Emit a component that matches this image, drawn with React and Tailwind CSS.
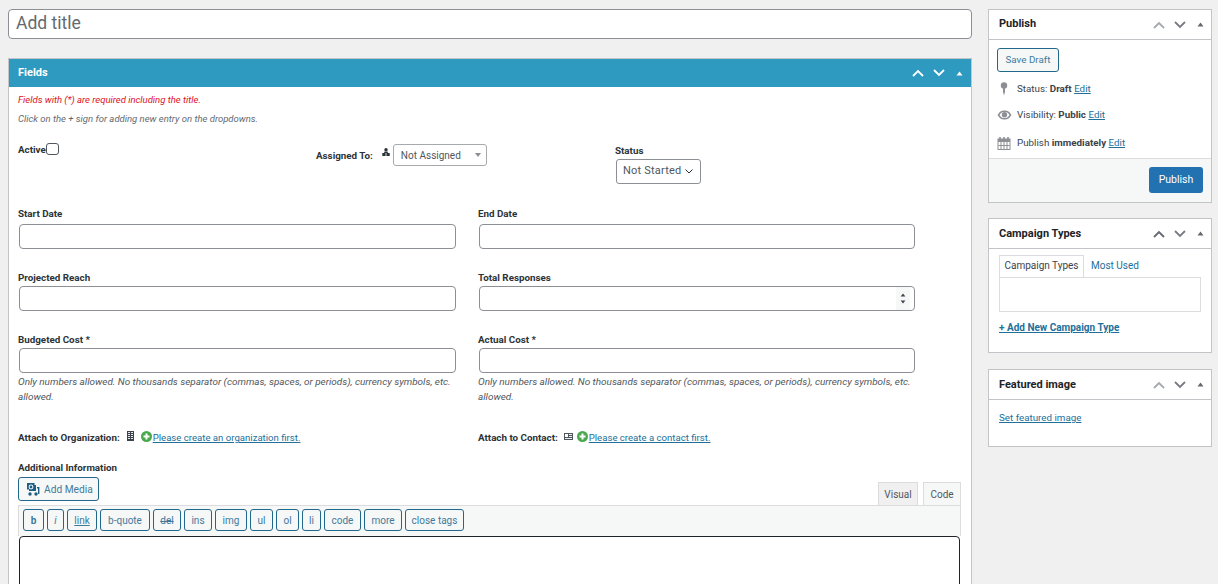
import React from "react";

const Up = ({ c = "#a7aaad" }) => (
  <svg width="12" height="8" viewBox="0 0 12 8" fill="none" stroke={c} strokeWidth="1.8"><path d="M1 7 L6 2 L11 7" /></svg>
);
const Down = ({ c = "#50575e" }) => (
  <svg width="12" height="8" viewBox="0 0 12 8" fill="none" stroke={c} strokeWidth="1.8"><path d="M1 1 L6 6 L11 1" /></svg>
);
const Tri = ({ c = "#50575e", w = 7, h = 5 }) => (
  <svg width={w} height={h} viewBox="0 0 7 5" fill={c}><path d="M0.5 4.5 L3.5 0.5 L6.5 4.5 Z" /></svg>
);

const Controls = ({ up = "#a7aaad", down = "#787c82", tri = "#646970" }) => (
  <div className="flex items-center">
    <span className="flex w-[21px] justify-center"><Up c={up} /></span>
    <span className="flex w-[21px] justify-center"><Down c={down} /></span>
    <span className="flex w-[21px] justify-center"><Tri c={tri} /></span>
  </div>
);

const Label = ({ children, className = "" }) => (
  <div className={`text-[9.8px] leading-[12px] font-bold text-[#2c3338] ${className}`}>{children}</div>
);
const Box = ({ children, right }) => (
  <div className={`relative ml-px h-[25px] rounded-[4px] border border-[#8c8f94] bg-white ${right ? "w-[436px]" : "w-[437px]"}`}>{children}</div>
);
const Help = () => (
  <p className="mt-[1px] w-[440px] text-[9.95px] leading-[15px] italic text-[#50575e]">
    Only numbers allowed. No thousands separator (commas, spaces, or periods), currency symbols, etc. allowed.
  </p>
);
const Link = ({ children, className = "" }) => (
  <a className={`text-[#22709a] underline ${className}`}>{children}</a>
);
const Plus = () => (
  <svg width="11" height="11" viewBox="0 0 11 11" className="shrink-0">
    <circle cx="5.5" cy="5.5" r="5.5" fill="#4aa84e" />
    <path d="M5.5 2.5 V8.5 M2.5 5.5 H8.5" stroke="#fff" strokeWidth="2" />
  </svg>
);
const Tool = ({ children, w, className = "" }) => (
  <span
    style={{ width: w }}
    className={`flex h-[22px] shrink-0 items-center justify-center rounded-[3px] border border-[#22688c] bg-[#f6f7f7] text-[10px] text-[#3f7a9c] ${className}`}
  >
    {children}
  </span>
);
const SideHead = ({ title, low, up }) => (
  <div className="flex h-[30px] items-center justify-between border-b border-[#c3c4c7] pl-[10px]">
    <span className={`text-[11px] font-bold text-[#1d2327] ${low ? "pt-[2px]" : ""}`}>{title}</span>
    <Controls up={up} />
  </div>
);

export default function App() {
  return (
    <div
      className="flex h-[584px] items-start overflow-hidden bg-[#f0f0f1] pt-[9px] pr-[6px] pl-[8px]"
      style={{ fontFamily: "Roboto, sans-serif" }}
    >
      <main className="w-[964px] shrink-0">
        <div className="flex h-[30px] items-center rounded-[4px] border border-[#8c8f94] bg-white pb-[1px] pl-[7px] text-[17.5px] text-[#646970]">
          Add title
        </div>

        <section className="mt-[19px] border border-[#c3c4c7] bg-white">
          <div className="flex h-[28px] items-center justify-between bg-[#2e9abf] pr-[1px] pl-[9px]">
            <span className="text-[11px] font-bold text-white">Fields</span>
            <Controls up="#fff" down="#fff" tri="#fff" />
          </div>

          <div className="pl-[9px]">
            <p className="mt-[7px] text-[9.5px] leading-[12px] italic text-[#e0101e]">Fields with (*) are required including the title.</p>
            <p className="mt-[7px] text-[9.5px] leading-[12px] italic text-[#646970]">Click on the + sign for adding new entry on the dropdowns.</p>

            <div className="mt-[19px] grid h-[59px] grid-cols-[298px_299px_1fr]">
              <div className="flex items-start">
                <Label>Active</Label>
                <span className="mt-[-1px] h-[12px] w-[13px] rounded-[3px] border border-[#50575e] bg-white" />
              </div>
              <div className="flex items-start">
                <Label className="mt-[6px]">Assigned To:</Label>
                <svg width="8" height="8" viewBox="0 0 8 8" fill="#2c3338" className="mt-[4px] ml-[9px]">
                  <circle cx="4" cy="1.7" r="1.7" />
                  <path d="M2.2 3.6 H5.8 V5 H2.2 Z" />
                  <path d="M0.3 5 H3.6 V8 H0.3 Z M4.4 5 H7.7 V8 H4.4 Z" />
                </svg>
                <span className="ml-[3px] flex h-[22px] w-[94px] items-center justify-between rounded-[3px] border border-[#a7aaad] bg-white pr-[5px] pl-[7px] text-[10px] text-[#50575e]">
                  Not Assigned
                  <svg width="6" height="4" viewBox="0 0 6 4" fill="#8c8f94"><path d="M0 0 H6 L3 4 Z" /></svg>
                </span>
              </div>
              <div>
                <Label className="mt-[1px]">Status</Label>
                <span className="mt-[2px] ml-px flex h-[25px] w-[85px] items-center justify-between rounded-[3px] border border-[#8c8f94] bg-white pr-[7px] pl-[6px] text-[11px] tracking-[0.2px] text-[#50575e]">
                  Not Started
                  <svg width="8" height="5" viewBox="0 0 8 5" fill="none" stroke="#2c3338" strokeWidth="1"><path d="M0.5 0.5 L4 4 L7.5 0.5" /></svg>
                </span>
              </div>
            </div>

            <div className="mt-[5px] grid grid-cols-[460px_1fr]">
              <div>
                <Label>Start Date</Label>
                <div className="mt-[4px]"><Box /></div>
                <Label className="mt-[23px]">Projected Reach</Label>
                <div className="mt-[2px]"><Box /></div>
                <Label className="mt-[23px]">Budgeted Cost *</Label>
                <div className="mt-[2px]"><Box /></div>
                <Help />
              </div>
              <div>
                <Label>End Date</Label>
                <div className="mt-[4px]"><Box right /></div>
                <Label className="mt-[23px]">Total Responses</Label>
                <div className="mt-[2px]">
                  <Box right>
                    <span className="absolute top-0 right-[4px] flex h-full w-[14px] flex-col items-center justify-center gap-[3px] bg-[#f6f7f7]">
                      <Tri c="#3c434a" w={6} h={4} />
                      <span className="rotate-180 leading-[0]"><Tri c="#3c434a" w={6} h={4} /></span>
                    </span>
                  </Box>
                </div>
                <Label className="mt-[23px]">Actual Cost *</Label>
                <div className="mt-[2px]"><Box right /></div>
                <Help />
              </div>
            </div>

            <div className="mt-[27px] grid grid-cols-[460px_1fr] text-[9.6px]">
              <div className="flex items-center">
                <Label>Attach to Organization:</Label>
                <svg width="7" height="10" viewBox="0 0 7 10" className="mt-[-4px] ml-[7px]">
                  <path d="M0 0 H7 V10 H0 Z" fill="#3c434a" />
                  <path d="M1 1.5 H3 M4 1.5 H6 M1 3.5 H3 M4 3.5 H6 M1 5.5 H3 M4 5.5 H6 M1 7.5 H3 M4 7.5 H6" stroke="#fff" strokeWidth="0.9" />
                </svg>
                <span className="mt-[-4px] ml-[7px]"><Plus /></span>
                <Link className="ml-px">Please create an organization first.</Link>
              </div>
              <div className="flex items-center">
                <Label>Attach to Contact:</Label>
                <svg width="9" height="7" viewBox="0 0 9 7" className="mt-[-4px] ml-[6px]">
                  <path d="M0 0 H9 V7 H0 Z" fill="#50575e" />
                  <path d="M1 1 H4 V4 H1 Z" fill="#fff" />
                  <path d="M5 1.5 H8 M5 3.5 H8 M1 5.5 H8" stroke="#fff" strokeWidth="0.9" />
                </svg>
                <span className="mt-[-4px] ml-[4px]"><Plus /></span>
                <Link className="ml-px">Please create a contact first.</Link>
              </div>
            </div>

            <Label className="mt-[17px]">Additional Information</Label>

            <div className="mt-[3px] mr-[10px] flex items-end justify-between">
              <span className="mb-[4px] flex h-[24px] w-[81px] items-center rounded-[3px] border border-[#22688c] bg-[#f6f7f7] pl-[7px] text-[10.2px] text-[#3f7a9c]">
                <svg width="14" height="13" viewBox="0 0 14 13" fill="#1f5f85" className="mr-[4px]">
                  <path d="M1 0 H8.5 V2 H10 V8 H3 V6.5 H1 Z" />
                  <circle cx="5" cy="4" r="2.4" fill="#f6f7f7" />
                  <circle cx="5" cy="4" r="1.4" />
                  <circle cx="4" cy="11" r="1.7" />
                  <path d="M9 11 V5" />
                  <circle cx="10" cy="11" r="1.7" />
                  <path d="M11 4 H13.4 V11 H12 V5.5 H11 Z" />
                </svg>
                Add Media
              </span>
              <div className="flex gap-[5px] text-[10px] text-[#50575e]">
                <span className="flex h-[23px] w-[40px] items-center justify-center border border-b-0 border-[#dcdcde] bg-[#f0f0f1]">Visual</span>
                <span className="flex h-[23px] w-[38px] items-center justify-center border border-b-0 border-[#dcdcde] bg-[#f6f7f7]">Code</span>
              </div>
            </div>

            <div className="mr-[10px] flex h-[31px] items-start gap-[3px] border border-b-0 border-[#dcdcde] bg-[#f6f7f7] pt-[3px] pl-[4px]">
              <Tool w={21} className="font-bold">b</Tool>
              <Tool w={17} className="italic">i</Tool>
              <Tool w={30} className="underline">link</Tool>
              <Tool w={50}>b-quote</Tool>
              <Tool w={28} className="line-through">del</Tool>
              <Tool w={28}>ins</Tool>
              <Tool w={32}>img</Tool>
              <Tool w={23}>ul</Tool>
              <Tool w={23}>ol</Tool>
              <Tool w={19}>li</Tool>
              <Tool w={37}>code</Tool>
              <Tool w={38}>more</Tool>
              <Tool w={59}>close tags</Tool>
            </div>
            <div className="mr-[11px] ml-px h-[120px] rounded-[4px] border border-[#1d2327] bg-white" />
          </div>
        </section>
      </main>

      <aside className="ml-[16px] w-[224px] shrink-0">
        <div className="h-[194px] border border-[#c3c4c7] bg-white">
          <SideHead title="Publish" />
          <div className="h-[118px] pt-[8px] pl-[8px] text-[9.8px] text-[#3c434a]">
            <span className="flex h-[24px] w-[62px] items-center justify-center rounded-[3px] border border-[#22688c] bg-[#f6f7f7] text-[9.8px] text-[#3f7a9c]">Save Draft</span>
            <div className="mt-[9px] flex h-[16px] items-center">
              <svg width="8" height="14" viewBox="0 0 8 14" fill="#8c8f94" className="mr-[5px] ml-[3px] shrink-0">
                <circle cx="4" cy="3.5" r="3.2" />
                <path d="M3 6 H5 V10 L4 13.5 L3 10 Z" />
              </svg>
              <span className="ml-[4px]">Status: <b>Draft</b> <Link>Edit</Link></span>
            </div>
            <div className="mt-[10px] flex h-[16px] items-center">
              <svg width="15" height="10" viewBox="0 0 15 10" className="mr-[5px] shrink-0">
                <path d="M0.5 5 C3 1 5 0.5 7.5 0.5 C10 0.5 12 1 14.5 5 C12 9 10 9.5 7.5 9.5 C5 9.5 3 9 0.5 5 Z" fill="#8c8f94" />
                <path d="M2.5 5 C4 2.5 5.5 2 7.5 2 C9.5 2 11 2.5 12.5 5 C11 7.5 9.5 8 7.5 8 C5.5 8 4 7.5 2.5 5 Z" fill="#fff" />
                <circle cx="7.5" cy="4.7" r="2.7" fill="#8c8f94" />
              </svg>
              <span>Visibility: <b>Public</b> <Link>Edit</Link></span>
            </div>
            <div className="mt-[12px] flex h-[16px] items-center">
              <svg width="14" height="13" viewBox="0 0 14 13" className="mr-[6px] shrink-0">
                <path d="M0.5 1.5 H13.5 V13 H0.5 Z" fill="#8c8f94" />
                <path d="M3 0 V3 M7 0 V3 M11 0 V3" stroke="#8c8f94" strokeWidth="1.6" />
                <path d="M1.5 5 H12.5 V12 H1.5 Z" fill="#fff" />
                <path d="M4 5 V12 M7 5 V12 M10 5 V12 M1.5 8.5 H12.5" stroke="#8c8f94" strokeWidth="1" />
              </svg>
              <span>Publish <b>immediately</b> <Link>Edit</Link></span>
            </div>
          </div>
          <div className="flex h-[44px] items-start justify-end border-t border-[#dcdcde] bg-[#f6f7f7] pt-[8px] pr-[8px]">
            <span className="flex h-[26px] w-[54px] items-center justify-center rounded-[3px] bg-[#2271b1] text-[10.5px] text-white">Publish</span>
          </div>
        </div>

        <div className="mt-[15px] h-[135px] border border-[#c3c4c7] bg-white">
          <SideHead title="Campaign Types" low up="#646970" />
          <div className="pt-[6px] pl-[10px] text-[10px]">
            <div className="flex h-[22px] items-center">
              <span className="relative z-10 flex h-[22px] w-[85px] items-center justify-center border border-b-0 border-[#dcdcde] bg-white pb-[2px] text-[#3c434a]">Campaign Types</span>
              <a className="ml-[7px] pb-[2px] text-[#22709a]">Most Used</a>
            </div>
            <div className="h-[35px] w-[202px] border border-[#dcdcde] bg-white" />
            <Link className="mt-[8px] block font-bold">+ Add New Campaign Type</Link>
          </div>
        </div>

        <div className="mt-[16px] h-[78px] border border-[#c3c4c7] bg-white">
          <SideHead title="Featured image" low />
          <div className="pt-[11px] pl-[10px] text-[9.8px]">
            <Link>Set featured image</Link>
          </div>
        </div>
      </aside>
    </div>
  );
}
